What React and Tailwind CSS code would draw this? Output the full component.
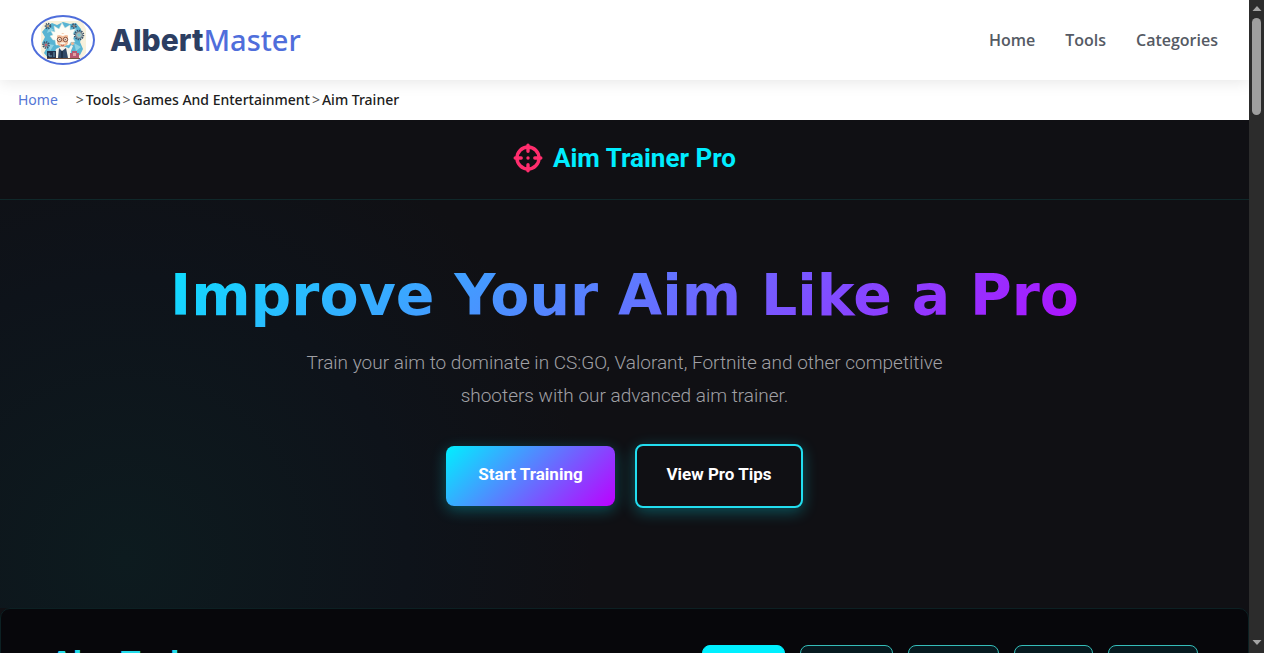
import React from "react";

const navLinks = ["Home", "Tools", "Categories"];
const trail = ["Tools", "Games And Entertainment", "Aim Trainer"];
const modes = [
  { name: "Classic", size: "w-[83px]", active: true },
  { name: "Precision", size: "w-[93px]" },
  { name: "Tracking", size: "w-[91px]" },
  { name: "Speed", size: "w-[79px]" },
  { name: "Reflex", size: "w-[90px]" },
];

function Gear({ x, y, r, color }) {
  return (
    <g transform={`translate(${x} ${y})`}>
      <circle r={r} fill="none" stroke="#3c5068" strokeWidth="1.6" strokeDasharray="1.4 0.9" />
      <circle r={r - 1} fill="#a9b8b6" stroke="#4d6175" strokeWidth="0.8" />
      <circle r={r * 0.35} fill={color} />
    </g>
  );
}

function ProfessorLogo() {
  return (
    <svg width="64" height="50" viewBox="0 0 64 50" aria-hidden="true">
      <ellipse cx="32" cy="25" rx="31" ry="24" fill="#ffffff" />
      <path d="M14 6h37l4 8v24l-5 6H14l-4-7V13z" fill="#f8f1dc" />
      <path d="M16 11l5-3 5 2 6-3 7 2 6-1 5 6 1 8-2 5 3 7-3 6-6 3H17l-4-5 3-6-5-4 3-6-3-5z" fill="#58b4d3" />
      <path d="M18 12l5 3-7 3zM44 12l-3 4 7 4zM17 29l6 1-4 6zM43 28l7 4-5 4z" fill="#8ed2e3" />
      <path d="M22 25l-3-4 3-1-2-4 4 1-1-6 5 3 3-6 3 5 5-3v5l5-1-2 5 3 1-3 3 2 4-4 0-2 3H25l-1-5z" fill="#fdfdf6" stroke="#d3e5df" strokeWidth="0.5" />
      <path d="M26 20q5-4 11 0v8q-2 4-5.500 4T26 28z" fill="#f2bd98" />
      <path d="M25 21l3-4 4 2 3-2 4 4-4-1-3 1-4-1z" fill="#fffdf6" />
      <g fill="#f9dcc2" stroke="#754538" strokeWidth="0.9">
        <circle cx="28.500" cy="24.500" r="2.2" />
        <circle cx="34.500" cy="24.500" r="2.2" />
      </g>
      <circle cx="28.700" cy="24.600" r="0.6" fill="#333b4b" />
      <circle cx="34.300" cy="24.600" r="0.6" fill="#333b4b" />
      <path d="M28 28q3.500-1.500 7 0-3 2.500-7 0" fill="#f8f5eb" />
      <path d="M30 30q1.500 1.500 3 0" fill="none" stroke="#a74b45" strokeWidth="0.9" />
      <path d="M25 34l4-2h6l4 2 2 9H23z" fill="#f5f3eb" />
      <path d="M28 33l3 3 4-3 2 10H27z" fill="#304765" />
      <path d="M31 36v7" stroke="#18293f" strokeWidth="1.5" />
      <path d="M37 35l3-5 2 1-3 7z" fill="#f5f3eb" />
      <circle cx="41.500" cy="28.500" r="1.6" fill="#f0b592" />
      <Gear x={17} y={11} r={2.5} color="#d19a5e" />
      <Gear x={43} y={11} r={2} color="#d18b65" />
      <Gear x={48} y={20} r={4.500} color="#78c7d3" />
      <Gear x={15} y={30} r={3} color="#cf4c5d" />
      <path d="M16 36h9v7h-9z" fill="#25334d" />
      <path d="M18 38v3h3M23 37v5" fill="none" stroke="#7ab5cb" strokeWidth="0.8" />
      <path d="M39 38h2v-2h5v2h2v5h-9z" fill="#b75771" />
      <path d="M42 38h3v3h-3z" fill="#e1a1a1" />
      <path d="M16 43.500h33" stroke="#73523d" strokeWidth="1" />
      <ellipse cx="32" cy="25" rx="31" ry="24" fill="none" stroke="#4f6edb" strokeWidth="2" />
    </svg>
  );
}

function CrosshairIcon() {
  return (
    <svg width="30" height="30" viewBox="0 0 30 30" fill="none" stroke="#ff2d6d" strokeLinecap="round" aria-hidden="true">
      <circle cx="15" cy="15" r="11" strokeWidth="3.4" />
      <path d="M15 2.200v6M15 21.800v6M2.200 15h6M21.800 15h6" strokeWidth="3.4" />
      <circle cx="15" cy="15" r="1.700" fill="#ff2d6d" stroke="none" />
    </svg>
  );
}

function ScrollTrack() {
  return (
    <div className="flex w-[15px] shrink-0 flex-col items-center bg-[#2c2c2c] py-1" aria-hidden="true">
      <svg width="10" height="8" viewBox="0 0 10 8">
        <path d="M0.500 7L5 2l4.500 5z" fill="#a5a5a5" />
      </svg>
      <div className="mt-[6px] h-[15%] w-[9px] rounded-full bg-[#9f9f9f]" />
      <svg className="mt-auto" width="10" height="10" viewBox="0 0 10 10">
        <path d="M0.500 1L5 6l4.500-5z" fill="#a5a5a5" />
      </svg>
    </div>
  );
}

export default function App() {
  return (
    <div className="flex h-screen overflow-hidden bg-[#101014]">
      <div className="flex min-w-0 flex-1 flex-col overflow-hidden *:shrink-0">
        <header className="z-10 flex h-20 items-center justify-between bg-white px-[31px] shadow-[0_2px_15px_rgba(0,0,0,0.1)]">
          <a href="#home" className="flex items-center gap-[15px]">
            <ProfessorLogo />
            <span className="flex items-baseline leading-[44px]">
              <span className="font-['Inter',sans-serif] text-[30px] font-extrabold text-[#2c3e62]">Albert</span>
              <span className="font-['Noto_Sans',sans-serif] text-[29px] font-medium text-[#4f6edb]">Master</span>
            </span>
          </a>
          <nav aria-label="Main" className="flex gap-[30px] font-['Open_Sans',sans-serif] text-base font-semibold text-[#555a64]">
            {navLinks.map((item) => (
              <a key={item} href={`#${item.toLowerCase()}`}>{item}</a>
            ))}
          </nav>
        </header>

        <nav aria-label="Breadcrumb" className="flex h-10 items-center gap-[2px] bg-white pl-[18px] font-['Noto_Sans',sans-serif] text-sm font-medium text-[#202020]">
          <a href="#home" className="mr-4 font-normal text-[#5576d5]">Home</a>
          {trail.map((item) => (
            <React.Fragment key={item}>
              <span className="font-normal text-[#555]">&gt;</span>
              <a href={`#${item.replaceAll(" ", "-").toLowerCase()}`}>{item}</a>
            </React.Fragment>
          ))}
        </nav>

        <div className="flex h-20 items-center justify-center gap-[10px] border-b border-[#10282a] bg-[#101014] pb-1">
          <CrosshairIcon />
          <span className="font-['Roboto',sans-serif] text-[26px] leading-8 font-bold text-[#00edff]">Aim Trainer Pro</span>
        </div>

        <main>
          <section className="flex flex-col items-center bg-[radial-gradient(circle_470px_at_10%_88%,#0d1b1f_0%,#0e131a_60%,#101014_100%)] px-5 pt-[60px] pb-[100px] text-center">
            <h1 className="bg-[linear-gradient(135deg,#00f0ff,#bd00ff)] bg-clip-text px-20 font-['DejaVu_Sans',sans-serif] text-[57px] leading-[70px] font-bold text-transparent">
              Improve Your Aim Like a Pro
            </h1>
            <p className="mt-4 max-w-[680px] font-['Roboto',sans-serif] text-[19px] leading-[33px] font-light text-[#a0a0a5]">
              Train your aim to dominate in CS:GO, Valorant, Fortnite and other competitive shooters with our advanced aim trainer.
            </p>
            <div className="mt-8 flex items-center gap-5 font-['Roboto',sans-serif] text-[17px] font-bold text-white">
              <button type="button" className="h-[60px] w-[169px] rounded-lg bg-[linear-gradient(135deg,#00f0ff,#bd00ff)] pb-[2px] whitespace-nowrap shadow-[0_4px_15px_rgba(0,240,255,0.3)]">
                Start Training
              </button>
              <button type="button" className="h-16 w-[168px] rounded-lg border-2 border-[#22def0] bg-[#101014] pb-[2px] whitespace-nowrap shadow-[0_4px_15px_rgba(0,240,255,0.3)]">
                View Pro Tips
              </button>
            </div>
          </section>

          <section className="flex h-[500px] items-start justify-between rounded-[10px] border border-[#0c2023] bg-[#07070b] px-[50px] pt-9">
            <h2 className="font-['DejaVu_Sans',sans-serif] text-[28px] leading-9 font-bold text-[#22dbea]">Aim Trainer</h2>
            <div className="flex gap-[15px] font-['Roboto',sans-serif] text-sm text-white">
              {modes.map(({ name, size, active }) => (
                <button
                  key={name}
                  type="button"
                  className={`${size} h-10 rounded-lg border ${active ? "border-[#00f0ff] bg-[#00f0ff] text-[#101014]" : "border-[#35bdb9] bg-[#06191f]"}`}
                >
                  {name}
                </button>
              ))}
            </div>
          </section>
        </main>
      </div>
      <ScrollTrack />
    </div>
  );
}
